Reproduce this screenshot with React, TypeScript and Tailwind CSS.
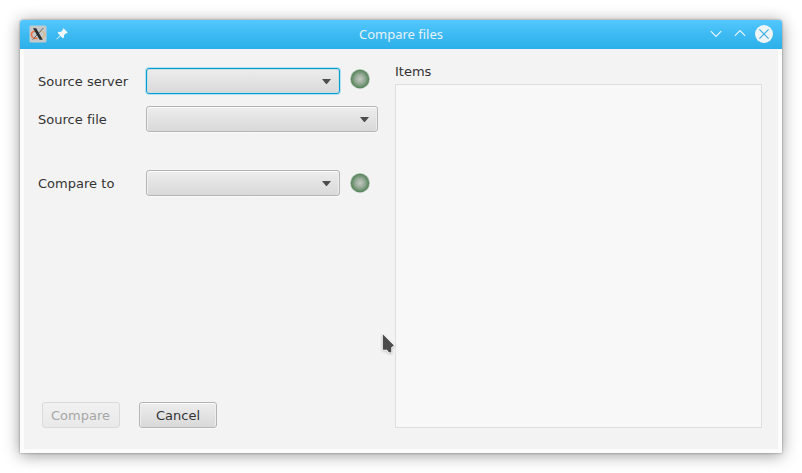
import type { ReactNode } from 'react';

function Combo({ className, focused = false, label }: { className: string; focused?: boolean; label: string }) {
  return (
    <button
      type="button"
      aria-label={label}
      className={`flex h-[26px] items-center justify-end rounded-[3px] border bg-linear-to-b from-[#ededed] to-[#d9d9d9] pr-2 ${
        focused
          ? 'border-[#039ed3] shadow-[0_0_0_1px_#b5e0ef,inset_0_0_0_1px_#cfdce2]'
          : 'border-[#b4b4b4] shadow-[0_1px_0_#fafafa,inset_0_1px_0_#fcfcfc,inset_1px_0_0_#f0f0f0,inset_-1px_0_0_#eeeeee]'
      } ${className}`}
    >
      <svg width="9" height="5" viewBox="0 0 9 5" className="block">
        <path d="M0 0H9L4.9 5H4.1Z" fill="#4d4d4d" />
      </svg>
    </button>
  );
}

function Lamp() {
  return (
    <svg width="20" height="20" viewBox="0 0 20 20" className="block shrink-0">
      <defs>
        <radialGradient id="lamp">
          <stop offset="0" stopColor="#c3c8c3" />
          <stop offset="0.5" stopColor="#97ac98" />
          <stop offset="1" stopColor="#548258" />
        </radialGradient>
      </defs>
      <circle cx="10" cy="10" r="10" fill="#bccbbc" />
      <circle cx="10" cy="10" r="9.2" fill="url(#lamp)" />
    </svg>
  );
}

function Row({ label, className = '', children }: { label: string; className?: string; children: ReactNode }) {
  return (
    <div className={`flex h-[26px] items-center ${className}`}>
      <span className="w-[108px] shrink-0 pt-px leading-4 tracking-[0.02px]">{label}</span>
      {children}
    </div>
  );
}

function TitleBar() {
  return (
    <header className="flex h-[29px] items-center rounded-t-[3px] bg-linear-to-b from-[#52c8fe] via-[#3dbaf2] to-[#2cb0ea] pr-2 pl-[9px]">
      <svg width="18" height="18" viewBox="0 0 18 18" className="mb-px block">
        <rect x="0.5" y="0.5" width="17" height="17" rx="1.5" fill="#c5c9ca" />
        <path d="M6.3 6.2C3 6.4 1.8 8.5 2.6 10.7C3.3 12.7 6 13.7 8.5 13.2" fill="none" stroke="#ef7146" strokeWidth="1.6" />
        <path d="M11 6C14.3 6.1 16.2 7.9 15.7 10C15.2 12.1 13 13.2 10.5 13.3" fill="none" stroke="#dfb58a" strokeWidth="1.2" />
        <path d="M14.4 3L3.6 14.7" stroke="#555e61" strokeWidth="0.9" />
        <path d="M4 3.2H7.2L13.8 14.7H10.7Z" fill="#292f31" />
      </svg>
      <svg width="12" height="12" viewBox="0 0 12 12" className="mr-px mb-px ml-[9px] block">
        <path d="M7.6 0.3L11.7 4.4L10.7 5.5L9.9 5.2L8 7.3L8.1 9.1L7 10.4L4.5 7.9L0.8 11.6L0.3 11.1L4 7.4L1.5 4.8L2.7 3.7L4.6 3.9L6.8 2.1L6.6 1.3Z" fill="#f1f7fa" />
      </svg>
      <h1 className="flex-1 pb-[2px] text-center font-['Noto_Sans',sans-serif] text-[13px] leading-[18px] font-normal text-[#e6f2f9]">
        <span className="mr-[-23px]">Compare files</span>
      </h1>
      <div className="flex items-center">
        <svg width="12" height="8" viewBox="0 0 12 8" className="mb-px block">
          <path d="M0.8 1.2L6 6.4L11.2 1.2" fill="none" stroke="#f1f7fa" strokeWidth="1.1" />
        </svg>
        <svg width="12" height="8" viewBox="0 0 12 8" className="mb-[3px] ml-3 block">
          <path d="M0.8 6.8L6 1.6L11.2 6.8" fill="none" stroke="#f1f7fa" strokeWidth="1.1" />
        </svg>
        <svg width="20" height="20" viewBox="0 0 20 20" className="mb-px ml-2 block">
          <circle cx="10" cy="10" r="9" fill="#eff4f7" />
          <path d="M5.4 5.4L14.6 14.6M14.6 5.4L5.4 14.6" stroke="#35aee4" strokeWidth="1.2" />
        </svg>
      </div>
    </header>
  );
}

export default function App() {
  return (
    <div className="relative h-[473px] w-[802px] overflow-hidden bg-white p-5 font-['DejaVu_Sans',sans-serif] text-[13px] text-[#333333]">
      <div className="h-[433px] w-[762px] rounded-t-[3px] shadow-[0_0_2px_rgba(0,0,0,0.45),0_2px_16px_rgba(0,0,0,0.42)]">
        <TitleBar />
        <div className="h-[404px] bg-[#fcfcfc] px-1 pb-1">
          <main className="flex h-[400px] bg-[#f3f3f3] pl-[14px]">
            <section className="flex w-[357px] flex-col pt-[19px]">
              <Row label="Source server">
                <Combo label="Source server" className="w-[194px]" focused />
                <div className="mb-1 ml-[10px]"><Lamp /></div>
              </Row>
              <Row label="Source file" className="mt-3">
                <Combo label="Source file" className="w-[232px]" />
              </Row>
              <Row label="Compare to" className="mt-[38px]">
                <Combo label="Compare to" className="w-[194px]" />
                <div className="ml-[10px]"><Lamp /></div>
              </Row>
              <div className="mt-auto mb-[21px] ml-1 flex gap-[19px]">
                <button type="button" disabled className="h-[26px] w-[78px] rounded-[3px] border border-[#dadada] bg-linear-to-b from-[#f1f1f1] to-[#e9e9e9] pt-px pr-px leading-4 text-[#a6a6a6]">Compare</button>
                <button type="button" className="h-[26px] w-[78px] rounded-[3px] border border-[#b4b4b4] bg-linear-to-b from-[#ededed] to-[#d9d9d9] pt-px leading-4 shadow-[0_1px_0_#fafafa,inset_0_1px_0_#fcfcfc,inset_1px_0_0_#f0f0f0,inset_-1px_0_0_#eeeeee]">Cancel</button>
              </div>
            </section>
            <section className="flex flex-col pt-[14px]">
              <h2 className="h-[21px] leading-[18px]">Items</h2>
              <div className="h-[344px] w-[367px] border border-[#dfdfdf] bg-[#f8f8f8]" />
            </section>
          </main>
        </div>
      </div>
      {/* Mouse pointer over the window */}
      <svg width="16" height="24" viewBox="0 0 16 24" className="absolute top-[332px] left-[381px] drop-shadow-[0_1px_1px_rgba(0,0,0,0.2)]">
        <path d="M1.8 2.2L13 13.4L10.3 15.2V20.5L7.8 20.2L6 17.7H1.8Z" fill="#4b4b4b" stroke="#ffffff" strokeWidth="1.6" strokeLinejoin="round" paintOrder="stroke" />
      </svg>
    </div>
  );
}
